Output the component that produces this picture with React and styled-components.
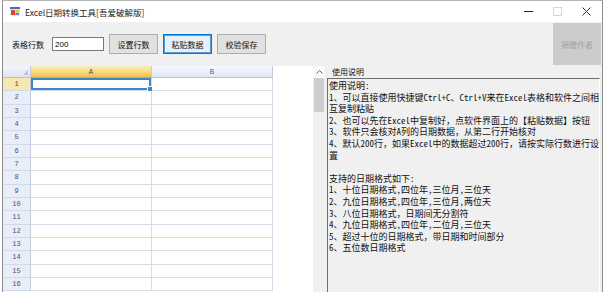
import React from 'react';
import styled, { createGlobalStyle } from 'styled-components';

const GlobalStyle = createGlobalStyle`
  html, body { margin: 0; padding: 0; background: #ffffff; overflow: hidden; }
  body { font-family: "Noto Sans CJK SC", "Noto Sans", sans-serif; color: #000; }
`;

const Window = styled.div`
  box-sizing: border-box;
  margin-left: 2px;
  width: 601px;
  height: 292px;
  border-left: 1px solid #8c8c8c;
  border-right: 1px solid #8c8c8c;
  border-top: 1px solid #b4b4b4;
  display: flex;
  flex-direction: column;
  background: #f0f0f0;
  overflow: hidden;
`;

const TitleBar = styled.div`
  height: 21px;
  flex: none;
  background: #ffffff;
  display: flex;
  align-items: center;
`;

const AppIcon = styled.svg`
  margin-left: 7px;
  width: 10px;
  height: 9px;
  flex: none;
`;

const Title = styled.span`
  margin-left: 5px;
  font-size: 8.5px;
  color: #1a1a1a;
  white-space: nowrap;
`;

const Controls = styled.div`
  margin-left: auto;
  margin-right: 1px;
  display: flex;
  height: 100%;
`;

const ControlBox = styled.div`
  width: 29px;
  height: 100%;
  display: flex;
  align-items: center;
  justify-content: center;
`;

const MinLine = styled.div`
  width: 9px;
  height: 1px;
  background: #222;
`;

const MaxBox = styled.div`
  width: 7px;
  height: 7px;
  border: 1px solid #d6d6d6;
`;

const Toolbar = styled.div`
  height: 44px;
  flex: none;
  display: flex;
  align-items: center;
  padding-left: 9px;
  font-size: 8px;
`;

const FieldLabel = styled.span`
  white-space: nowrap;
  color: #111;
`;

const NumInput = styled.div`
  box-sizing: border-box;
  margin-left: 8px;
  width: 52px;
  height: 14px;
  border: 1px solid #7a7a7a;
  background: #fff;
  padding-left: 2px;
  display: flex;
  align-items: center;
  font-family: "Liberation Sans", sans-serif;
  font-size: 8px;
`;

const Button = styled.button`
  box-sizing: border-box;
  margin-left: 5px;
  width: 49px;
  height: 20px;
  padding: 0;
  font-family: "Noto Sans CJK SC", sans-serif;
  font-size: 8px;
  color: #111;
  background: ${(p) => (p.$focused ? '#e5f1fb' : '#e1e1e1')};
  border: 1px solid ${(p) => (p.$focused ? '#0078d7' : '#adadad')};
  box-shadow: ${(p) => (p.$focused ? 'inset 0 0 0 1px #5a9bd8' : 'none')};
`;

const DonateButton = styled.button`
  margin-left: auto;
  margin-right: 1px;
  width: 48px;
  height: 42px;
  padding: 0;
  border: none;
  background: #cccccc;
  color: #a3a3a3;
  font-family: "Noto Sans CJK SC", sans-serif;
  font-size: 8px;
`;

const Main = styled.div`
  flex: 1;
  display: flex;
  min-height: 0;
`;

const Sheet = styled.div`
  width: 322px;
  flex: none;
  display: flex;
  background: #fff;
`;

const Cells = styled.div`
  flex: 1;
  display: grid;
  grid-template-columns: 28px 121px 121px 1fr;
  grid-template-rows: 12px;
  grid-auto-rows: 13.333px;
  align-content: start;
  overflow: hidden;
`;

const Corner = styled.div`
  box-sizing: border-box;
  background: linear-gradient(#f4f6fb, #dfe4ef);
  border-right: 1px solid #c3cbdc;
  border-bottom: 1px solid #b6c0d4;
  display: flex;
  align-items: flex-end;
  justify-content: flex-end;
  padding: 0 2px 2px 0;
`;

const ColHeader = styled.div`
  box-sizing: border-box;
  display: flex;
  align-items: center;
  justify-content: center;
  font-family: "Liberation Sans", sans-serif;
  font-size: 6.5px;
  color: ${(p) => (p.$selected ? '#5a4a20' : '#4d5b8b')};
  background: ${(p) =>
    p.$selected
      ? 'linear-gradient(#fcecbf 0%, #f8d982 55%, #f0bf4c 100%)'
      : 'linear-gradient(#f7f9fd, #e0e5f0)'};
  border-right: 1px solid #c3cbdc;
  border-bottom: 1px solid ${(p) => (p.$selected ? '#e2a93a' : '#b6c0d4')};
`;

const Blank = styled.div`
  background: #fff;
`;

const RowHeader = styled.div`
  box-sizing: border-box;
  display: flex;
  align-items: center;
  justify-content: center;
  font-family: "Liberation Mono", monospace;
  font-size: 7px;
  color: ${(p) => (p.$selected ? '#4a4a3a' : '#43508a')};
  background: ${(p) => (p.$selected ? '#f7e8b2' : '#e7eef8')};
  border-right: 1px solid #c3cbdc;
  border-bottom: 1px solid #d3dae7;
`;

const Cell = styled.div`
  box-sizing: border-box;
  position: relative;
  background: #fff;
  border-right: 1px solid #d6dce8;
  border-bottom: 1px solid #d6dce8;
  box-shadow: ${(p) => (p.$active ? 'inset 0 0 0 2px #3f86c8' : 'none')};
  &::after {
    content: '';
    display: ${(p) => (p.$active ? 'block' : 'none')};
    position: absolute;
    right: -2px;
    bottom: -2px;
    width: 4px;
    height: 4px;
    background: #3f86c8;
    border: 1px solid #fff;
  }
`;

const ScrollBar = styled.div`
  width: 12px;
  flex: none;
  display: flex;
  flex-direction: column;
  align-items: center;
  background: #f0f0f0;
`;

const ScrollArrow = styled.div`
  height: 12px;
  width: 100%;
  display: flex;
  align-items: center;
  justify-content: center;
  background: #fafafa;
`;

const ScrollThumb = styled.div`
  width: 10px;
  height: 34px;
  background: #cdcdcd;
`;

const Panel = styled.div`
  flex: 1;
  display: flex;
  flex-direction: column;
  min-width: 0;
`;

const PanelLabel = styled.div`
  height: 12px;
  flex: none;
  padding-left: 7px;
  font-size: 8px;
  line-height: 12px;
  color: #111;
`;

const InfoBox = styled.div`
  flex: 1;
  margin-left: 2px;
  margin-right: 2px;
  border-top: 1px solid #6e6e6e;
  border-left: 1px solid #6e6e6e;
  border-right: 1px solid #ffffff;
  padding: 1px 0 0 1px;
  background: #f0f0f0;
  font-family: "Noto Sans Mono CJK SC", "Noto Sans CJK SC", monospace;
  font-size: 9px;
  line-height: 11.6px;
  color: #111;
  overflow: hidden;
`;

const InfoLine = styled.div`
  white-space: pre;
  height: 11.6px;
`;

const infoLines = [
  '使用说明:',
  '1、可以直接使用快捷键Ctrl+C、Ctrl+V来在Excel表格和软件之间相',
  '互复制粘贴',
  '2、也可以先在Excel中复制好，点软件界面上的【粘贴数据】按钮',
  '3、软件只会核对A列的日期数据，从第二行开始核对',
  '4、默认200行，如果Excel中的数据超过200行，请按实际行数进行设',
  '置',
  '',
  '支持的日期格式如下:',
  '1、十位日期格式,四位年,三位月,三位天',
  '2、九位日期格式,四位年,三位月,两位天',
  '3、八位日期格式，日期间无分割符',
  '4、九位日期格式,四位年,二位月,三位天',
  '5、超过十位的日期格式，带日期和时间部分',
  '6、五位数日期格式',
];

const rows = Array.from({ length: 16 }, (_, i) => i + 1);

export default function App() {
  return (
    <>
      <GlobalStyle />
      <Window>
        <TitleBar>
          <AppIcon viewBox="0 0 10 9">
            <rect x="0" y="0" width="10" height="9" fill="#dfe8f5" />
            <rect x="0" y="0" width="10" height="2" fill="#3a6fc4" />
            <rect x="1" y="3" width="4" height="5" fill="#e2452b" />
            <rect x="5.5" y="3" width="3.5" height="2.5" fill="#f4b73a" />
            <rect x="5.5" y="6" width="3.5" height="2" fill="#4a8fd8" />
          </AppIcon>
          <Title>Excel日期转换工具[吾爱破解版]</Title>
          <Controls>
            <ControlBox>
              <MinLine />
            </ControlBox>
            <ControlBox>
              <MaxBox />
            </ControlBox>
            <ControlBox>
              <svg width="9" height="9" viewBox="0 0 9 9">
                <path d="M0.5 0.5 L8.5 8.5 M8.5 0.5 L0.5 8.5" stroke="#333" strokeWidth="1" />
              </svg>
            </ControlBox>
          </Controls>
        </TitleBar>
        <Toolbar>
          <FieldLabel>表格行数</FieldLabel>
          <NumInput>200</NumInput>
          <Button>设置行数</Button>
          <Button $focused>粘贴数据</Button>
          <Button>校验保存</Button>
          <DonateButton>捐赠作者</DonateButton>
        </Toolbar>
        <Main>
          <Sheet>
            <Cells>
              <Corner>
                <svg width="5" height="5" viewBox="0 0 5 5">
                  <path d="M5 0 L5 5 L0 5 Z" fill="#b9c0cf" />
                </svg>
              </Corner>
              <ColHeader $selected>A</ColHeader>
              <ColHeader>B</ColHeader>
              <Blank />
              {rows.map((r) => (
                <React.Fragment key={r}>
                  <RowHeader $selected={r === 1}>{r}</RowHeader>
                  <Cell $active={r === 1} />
                  <Cell />
                  <Blank />
                </React.Fragment>
              ))}
            </Cells>
            <ScrollBar>
              <ScrollArrow>
                <svg width="7" height="4" viewBox="0 0 7 4">
                  <path d="M0.5 3.5 L3.5 0.5 L6.5 3.5" stroke="#606060" strokeWidth="1" fill="none" />
                </svg>
              </ScrollArrow>
              <ScrollThumb />
            </ScrollBar>
          </Sheet>
          <Panel>
            <PanelLabel>使用说明</PanelLabel>
            <InfoBox>
              {infoLines.map((t, i) => (
                <InfoLine key={i}>{t}</InfoLine>
              ))}
            </InfoBox>
          </Panel>
        </Main>
      </Window>
    </>
  );
}
